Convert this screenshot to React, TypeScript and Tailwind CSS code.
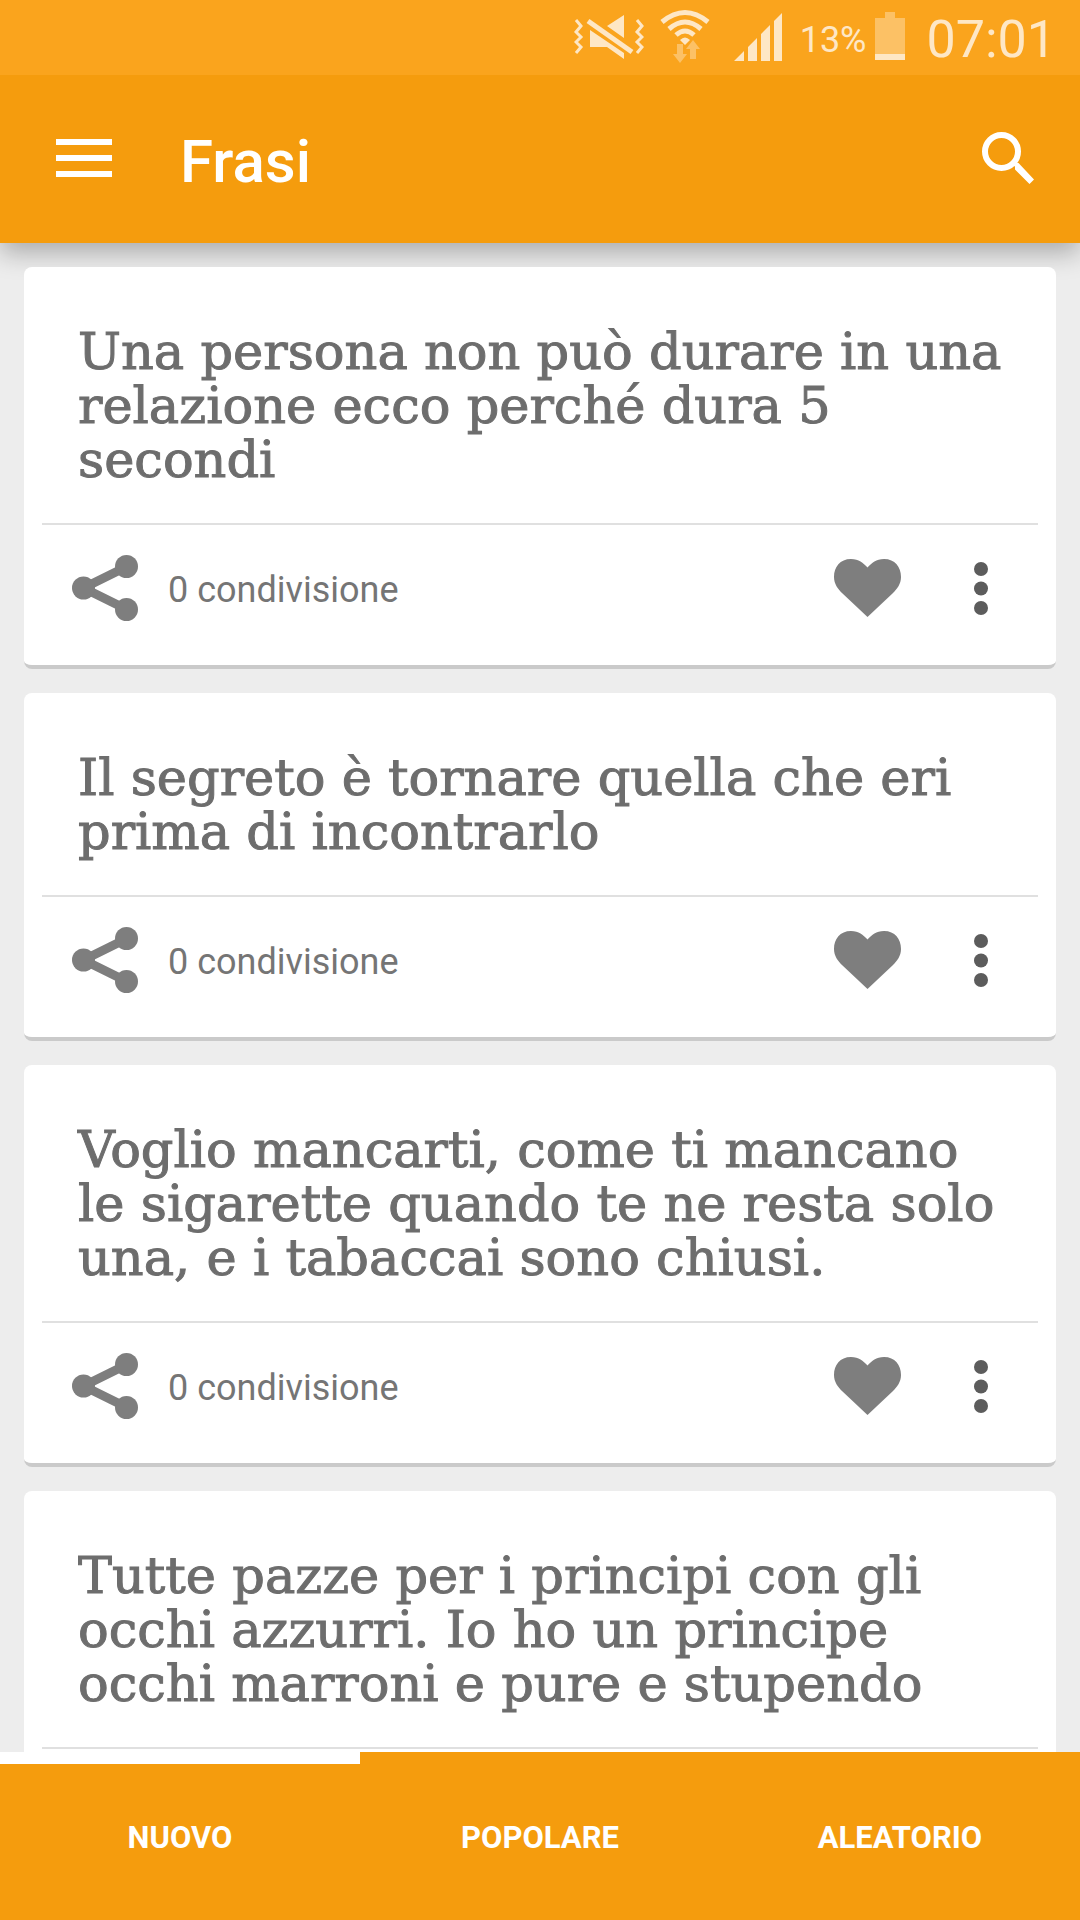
import React from "react";

const quotes = [
  {
    id: 1,
    lines: ["Una persona non può durare in una", "relazione ecco perché dura 5", "secondi"],
    shares: 0,
  },
  {
    id: 2,
    lines: ["Il segreto è tornare quella che eri", "prima di incontrarlo"],
    shares: 0,
  },
  {
    id: 3,
    lines: ["Voglio mancarti, come ti mancano", "le sigarette quando te ne resta solo", "una, e i tabaccai sono chiusi."],
    shares: 0,
  },
  {
    id: 4,
    lines: ["Tutte pazze per i principi con gli", "occhi azzurri. Io ho un principe", "occhi marroni e pure e stupendo"],
  },
];

const tabs = [
  { label: "NUOVO", active: true },
  { label: "POPOLARE", active: false },
  { label: "ALEATORIO", active: false },
];

const StatusBar: React.FC = () => (
  <div className="flex h-[75px] shrink-0 items-center justify-end bg-[#faa41d] pr-6 text-[#fee7c5]">
    {/* vibrate / muted */}
    <svg className="mr-4 h-[75px] w-[70px]" viewBox="0 0 70 75" fill="currentColor" aria-hidden="true">
      <path d="M50 15v23L33 26zM16 30l34 23v6L33 47H16z" />
      <path d="M14 21L58 52" stroke="#faa41d" strokeWidth="9" fill="none" />
      <path d="M14 21L58 52" stroke="currentColor" strokeWidth="5" fill="none" />
      <path
        d="M2 20l5 6-5 6 5 5-5 5 5 5-5 6M63 20l5 6-5 6 5 5-5 5 5 5-5 6"
        stroke="currentColor"
        strokeWidth="3"
        fill="none"
      />
    </svg>
    {/* wifi */}
    <svg className="mr-6 h-[75px] w-[50px]" viewBox="0 0 50 75" fill="none" aria-hidden="true">
      <g stroke="currentColor" strokeWidth="5">
        <path d="M2 22Q25 3 48 22" />
        <path d="M9 29Q25 15 41 29" />
        <path d="M16 35Q25 27 34 35" />
      </g>
      <path d="M20 40q5-5 10 0l-5 5z" fill="currentColor" />
      <path d="M17 44h6v10h4l-7 9-7-9h4zM30 59V49h-4l7-9 7 9h-4v10z" fill="#fcc165" />
    </svg>
    {/* signal */}
    <svg className="mr-[18px] h-[75px] w-[48px]" viewBox="0 0 48 75" fill="currentColor" aria-hidden="true">
      <path d="M0 61l10-10v10zM14 61V47l9-9v23zM27 61V34l9-9v36zM40 61V21l8-8v48z" />
    </svg>
    <span className="mt-1 mr-2 font-[Roboto,sans-serif] text-[36px] leading-none">13%</span>
    {/* battery */}
    <svg className="mr-[22px] h-[75px] w-[30px]" viewBox="0 0 30 75" fill="currentColor" aria-hidden="true">
      <path d="M10 12h10v6h10v36H0V18h10z" fill="#fcc165" />
      <path d="M0 54h30v6H0z" />
    </svg>
    <span className="mt-1 font-[Roboto,sans-serif] text-[52px] leading-none">07:01</span>
  </div>
);

const ShareIcon: React.FC = () => (
  <svg className="size-[66px]" viewBox="0 0 66 66" fill="currentColor" aria-hidden="true">
    <path d="M55 11.500L11.500 33 55 54.500" fill="none" stroke="currentColor" strokeWidth="9" />
    <circle cx="54.500" cy="11.500" r="11.500" />
    <circle cx="11.500" cy="33" r="11.500" />
    <circle cx="54.500" cy="54.500" r="11.500" />
  </svg>
);

const HeartIcon: React.FC = () => (
  <svg className="h-[58px] w-[67px]" viewBox="0 0 67 58" fill="currentColor" aria-hidden="true">
    <path d="M33.500 8.500C29 4 25 0 17 0 6 0 0 8 0 18c0 7 4 12 8 16l25.500 24L59 34c4-4 8-9 8-16C67 8 61 0 50 0c-8 0-12 4-16.500 8.500z" />
  </svg>
);

const DotsIcon: React.FC = () => (
  <svg className="h-[53px] w-[14px]" viewBox="0 0 14 53" fill="currentColor" aria-hidden="true">
    <circle cx="7" cy="7" r="7" />
    <circle cx="7" cy="26.500" r="7" />
    <circle cx="7" cy="46" r="7" />
  </svg>
);

interface QuoteCardProps {
  lines: string[];
  shares?: number;
}

const QuoteCard: React.FC<QuoteCardProps> = ({ lines, shares }) => (
  <article className="shrink-0 rounded-lg border-b-4 border-[#cacaca] bg-white px-[18px]">
    <p className="px-9 pt-[58px] pb-9 font-['DejaVu_Serif',serif] text-[51px] leading-[54px] whitespace-nowrap text-[#6d6d6d] [-webkit-text-stroke:1px_#6d6d6d]">
      {lines.map((line) => (
        <span className="block" key={line}>
          {line}
        </span>
      ))}
    </p>
    <div className="flex h-[142px] items-center border-t-2 border-[#e0e0e0] pr-[50px] pb-[14px] pl-[30px]">
      <button type="button" aria-label="Condividi" className="text-[#7e7e7e]">
        <ShareIcon />
      </button>
      {shares !== undefined && (
        <span className="mt-1 ml-[30px] font-[Roboto,sans-serif] text-[36px] leading-none text-[#757575]">
          {`${shares} condivisione`}
        </span>
      )}
      <button type="button" aria-label="Mi piace" className="ml-auto text-[#7e7e7e]">
        <HeartIcon />
      </button>
      <button type="button" aria-label="Altro" className="ml-[73px] text-[#5c5c5c]">
        <DotsIcon />
      </button>
    </div>
  </article>
);

const App: React.FC = () => {
  return (
    <div className="flex h-screen flex-col bg-[#ededed]">
      <header className="shrink-0 shadow-[0_10px_24px_rgba(0,0,0,0.28)]">
        <StatusBar />
        <div className="flex h-[168px] items-center bg-[#f59c0d] pr-[46px] pb-0.5 pl-14 text-white">
          <button type="button" aria-label="Menu">
            <svg className="h-[38px] w-14" viewBox="0 0 56 38" fill="currentColor" aria-hidden="true">
              <path d="M0 0h56v6H0zM0 16h56v6H0zM0 32h56v6H0z" />
            </svg>
          </button>
          <h1 className="mt-2 ml-[68px] font-[Roboto,sans-serif] text-[60px] leading-none font-medium">Frasi</h1>
          <button type="button" aria-label="Cerca" className="ml-auto">
            <svg className="size-[52px]" viewBox="0 0 52 52" fill="none" stroke="currentColor" strokeWidth="6" aria-hidden="true">
              <circle cx="19.500" cy="19.500" r="16.500" />
              <path d="M31 33.500l2.500-2.500h3L52 47.500 47.500 52 33 37.500v-3z" fill="currentColor" stroke="none" />
            </svg>
          </button>
        </div>
      </header>

      <main className="flex min-h-0 flex-1 flex-col gap-6 overflow-y-auto p-6 [scrollbar-width:none]">
        {quotes.map((quote) => (
          <QuoteCard key={quote.id} lines={quote.lines} shares={quote.shares} />
        ))}
      </main>

      <nav className="grid h-[168px] shrink-0 grid-cols-3 bg-[#f59c0d]">
        {tabs.map((tab) => (
          <button
            type="button"
            key={tab.label}
            className={`border-t-12 pb-2.5 font-[Roboto,sans-serif] text-[31px] leading-none font-bold text-white ${
              tab.active ? "border-white" : "border-transparent"
            }`}
          >
            {tab.label}
          </button>
        ))}
      </nav>
    </div>
  );
};

export default App;
